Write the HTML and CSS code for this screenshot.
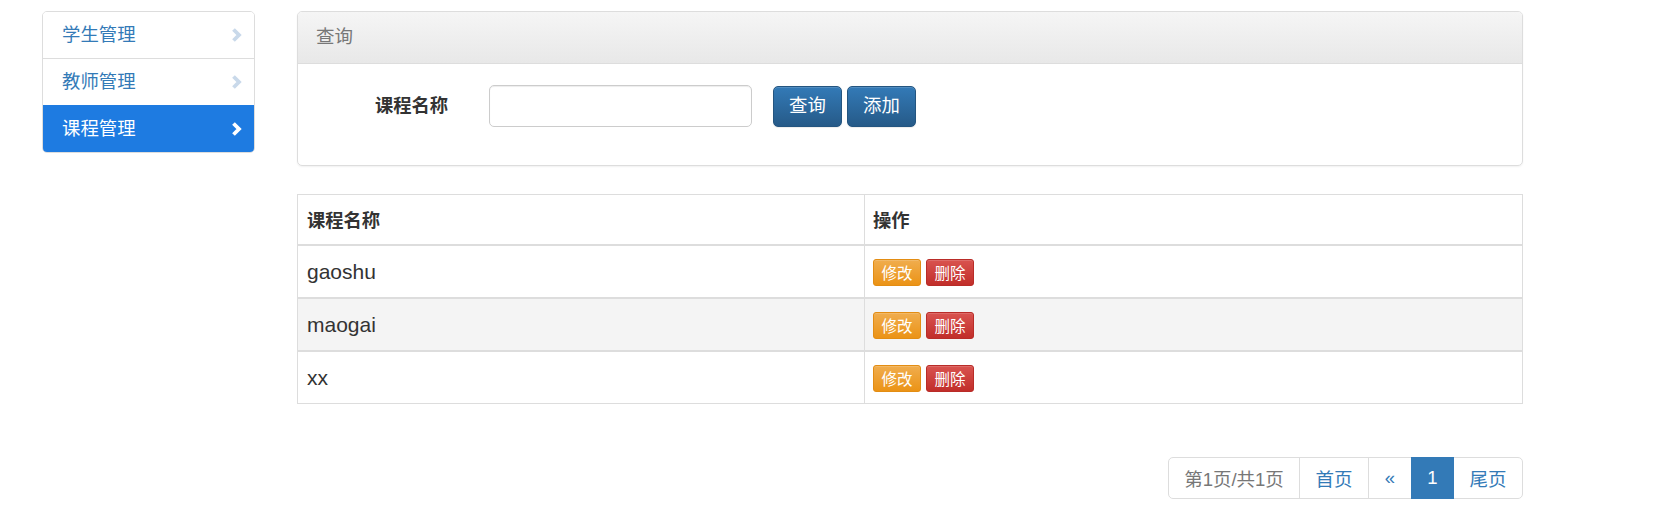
FILE: index.html
```html
<!DOCTYPE html>
<html lang="zh-CN">
<head>
<meta charset="utf-8">
<title>课程管理</title>
<link rel="stylesheet" href="styles.css">
</head>
<body>
<div class="layout">
  <aside class="sidebar">
    <ul class="side-list">
      <li class="side-item"><span>学生管理</span><svg class="chev" width="13" height="16" viewBox="0 0 13 16"><polyline points="3.5,2.5 9,8 3.5,13.5" fill="none" stroke="currentColor" stroke-width="3.8" stroke-linecap="butt" stroke-linejoin="miter"/></svg></li>
      <li class="side-item"><span>教师管理</span><svg class="chev" width="13" height="16" viewBox="0 0 13 16"><polyline points="3.5,2.5 9,8 3.5,13.5" fill="none" stroke="currentColor" stroke-width="3.8" stroke-linecap="butt" stroke-linejoin="miter"/></svg></li>
      <li class="side-item active"><span>课程管理</span><svg class="chev" width="13" height="16" viewBox="0 0 13 16"><polyline points="3.5,2.5 9,8 3.5,13.5" fill="none" stroke="currentColor" stroke-width="3.8" stroke-linecap="butt" stroke-linejoin="miter"/></svg></li>
    </ul>
  </aside>
  <main class="content">
    <section class="panel">
      <div class="panel-heading">查询</div>
      <div class="panel-body">
        <div class="form-row">
          <label class="form-label">课程名称</label>
          <input class="form-input" type="text">
          <button class="btn btn-primary">查询</button>
          <button class="btn btn-primary">添加</button>
        </div>
      </div>
    </section>
    <table class="data-table">
      <thead>
        <tr><th class="col-name">课程名称</th><th class="col-op">操作</th></tr>
      </thead>
      <tbody>
        <tr><td>gaoshu</td><td class="col-op"><button class="btn-sm btn-warning">修改</button><button class="btn-sm btn-danger">删除</button></td></tr>
        <tr class="striped"><td>maogai</td><td class="col-op"><button class="btn-sm btn-warning">修改</button><button class="btn-sm btn-danger">删除</button></td></tr>
        <tr><td>xx</td><td class="col-op"><button class="btn-sm btn-warning">修改</button><button class="btn-sm btn-danger">删除</button></td></tr>
      </tbody>
    </table>
    <nav class="pager-wrap">
      <ul class="pager">
        <li class="pg info">第1页/共1页</li>
        <li class="pg w69">首页</li>
        <li class="pg w43">&laquo;</li>
        <li class="pg w42 current">1</li>
        <li class="pg w69">尾页</li>
      </ul>
    </nav>
  </main>
</div>
</body>
</html>
```

FILE: styles.css
```css
* { box-sizing: border-box; }
html, body { margin: 0; padding: 0; background: #fff; }
body {
  font-family: "Liberation Sans", "Noto Sans CJK SC", sans-serif;
  font-size: 18.4px;
  color: #333;
}
.layout {
  display: flex;
  align-items: flex-start;
  padding: 11px 0 0 42px;
}
.sidebar { width: 213px; flex: none; }
.side-list {
  list-style: none;
  margin: 0;
  padding: 0;
  border: 1px solid #ddd;
  border-radius: 5px;
  overflow: hidden;
}
.side-item {
  height: 47px;
  display: flex;
  align-items: center;
  justify-content: space-between;
  padding: 0 11px 5px 19px;
  color: #337ab7;
  border-top: 1px solid #ddd;
  background: #fff;
  font-size: 18.4px;
}
.side-item .chev { margin-top: 4px; }
.side-item:first-child { border-top: none; height: 46px; }
.side-item .chev { color: #c9d9ea; }
.side-item.active {
  background: #1e7be1;
  color: #fff;
  border-top-color: #1e7be1;
  height: 47px;
}
.side-item.active .chev { color: #fff; }

.content { width: 1226px; margin-left: 42px; flex: none; }

.panel {
  border: 1px solid #ddd;
  border-radius: 5px;
  box-shadow: 0 1px 2px rgba(0,0,0,.06);
  overflow: hidden;
}
.panel-heading {
  height: 52px;
  display: flex;
  align-items: center;
  padding: 0 0 6px 18px;
  background: linear-gradient(#f5f5f5, #e8e8e8);
  border-bottom: 1px solid #ddd;
  color: #777;
  font-size: 18.5px;
}
.panel-body { padding: 21px 0 38px; }
.form-row { display: flex; align-items: center; }
.form-label {
  width: 150px;
  text-align: right;
  font-weight: bold;
  font-size: 18.3px;
  color: #333;
  padding-bottom: 4px;
}
.form-input {
  width: 263px;
  height: 42px;
  margin-left: 41px;
  border: 1px solid #ccc;
  border-radius: 5px;
  box-shadow: inset 0 1px 1px rgba(0,0,0,.075);
  font: inherit;
  padding: 0 12px;
}
.btn {
  font-family: inherit;
  font-size: 18.4px;
  height: 41px;
  width: 69px;
  border-radius: 5px;
  cursor: pointer;
  padding: 0 0 4px;
}
.btn-primary {
  color: #fff;
  background: linear-gradient(#337ab7, #265a88);
  border: 1px solid #245580;
  box-shadow: inset 0 1px 0 rgba(255,255,255,.15), 0 1px 1px rgba(0,0,0,.075);
}
.form-input + .btn { margin-left: 21px; }
.btn + .btn { margin-left: 5px; }

.data-table {
  width: 100%;
  margin-top: 28px;
  border-collapse: collapse;
  border: 1px solid #ddd;
}
.data-table th, .data-table td {
  border-left: 1px solid #ddd;
  border-right: 1px solid #ddd;
  text-align: left;
  padding: 0 9px;
  vertical-align: middle;
}
.data-table .col-op { padding-left: 8px; }
.data-table th {
  height: 50px;
  font-weight: bold;
  font-size: 18.3px;
  border-bottom: 2px solid #ddd;
}
.data-table td {
  height: 53px;
  font-size: 21px;
  border-top: 2px solid #ddd;
  padding-top: 1px;
}
.data-table .col-name { width: 567px; }
.data-table tr.striped td { background: #f4f4f4; }
.btn-sm {
  font-family: inherit;
  font-size: 15.5px;
  height: 27px;
  width: 48px;
  padding: 0 0 2px;
  color: #fff;
  border-radius: 3px;
  vertical-align: middle;
  margin-top: 2px;
}
.btn-sm + .btn-sm { margin-left: 5px; }
.btn-warning {
  background: linear-gradient(#f0ad4e, #eb9316);
  border: 1px solid #e38d13;
  box-shadow: inset 0 1px 0 rgba(255,255,255,.15);
}
.btn-danger {
  background: linear-gradient(#d9534f, #c12e2a);
  border: 1px solid #b92c28;
  box-shadow: inset 0 1px 0 rgba(255,255,255,.15);
}

.pager-wrap {
  display: flex;
  justify-content: flex-end;
  margin-top: 53px;
}
.pager {
  display: flex;
  list-style: none;
  margin: 0;
  padding: 0;
}
.pg {
  height: 42px;
  display: flex;
  align-items: center;
  justify-content: center;
  border: 1px solid #ddd;
  margin-left: -1px;
  color: #337ab7;
  font-size: 18.5px;
  background: #fff;
}
.pg.info { width: 132px; color: #777; border-radius: 5px 0 0 5px; margin-left: 0; }
.pg.w69 { width: 70px; }
.pg.w43 { width: 44px; }
.pg.w42 { width: 43px; }
.pg:last-child { border-radius: 0 5px 5px 0; }
.pg.current { background: #337ab7; border-color: #337ab7; color: #fff; position: relative; z-index: 1; }
```
